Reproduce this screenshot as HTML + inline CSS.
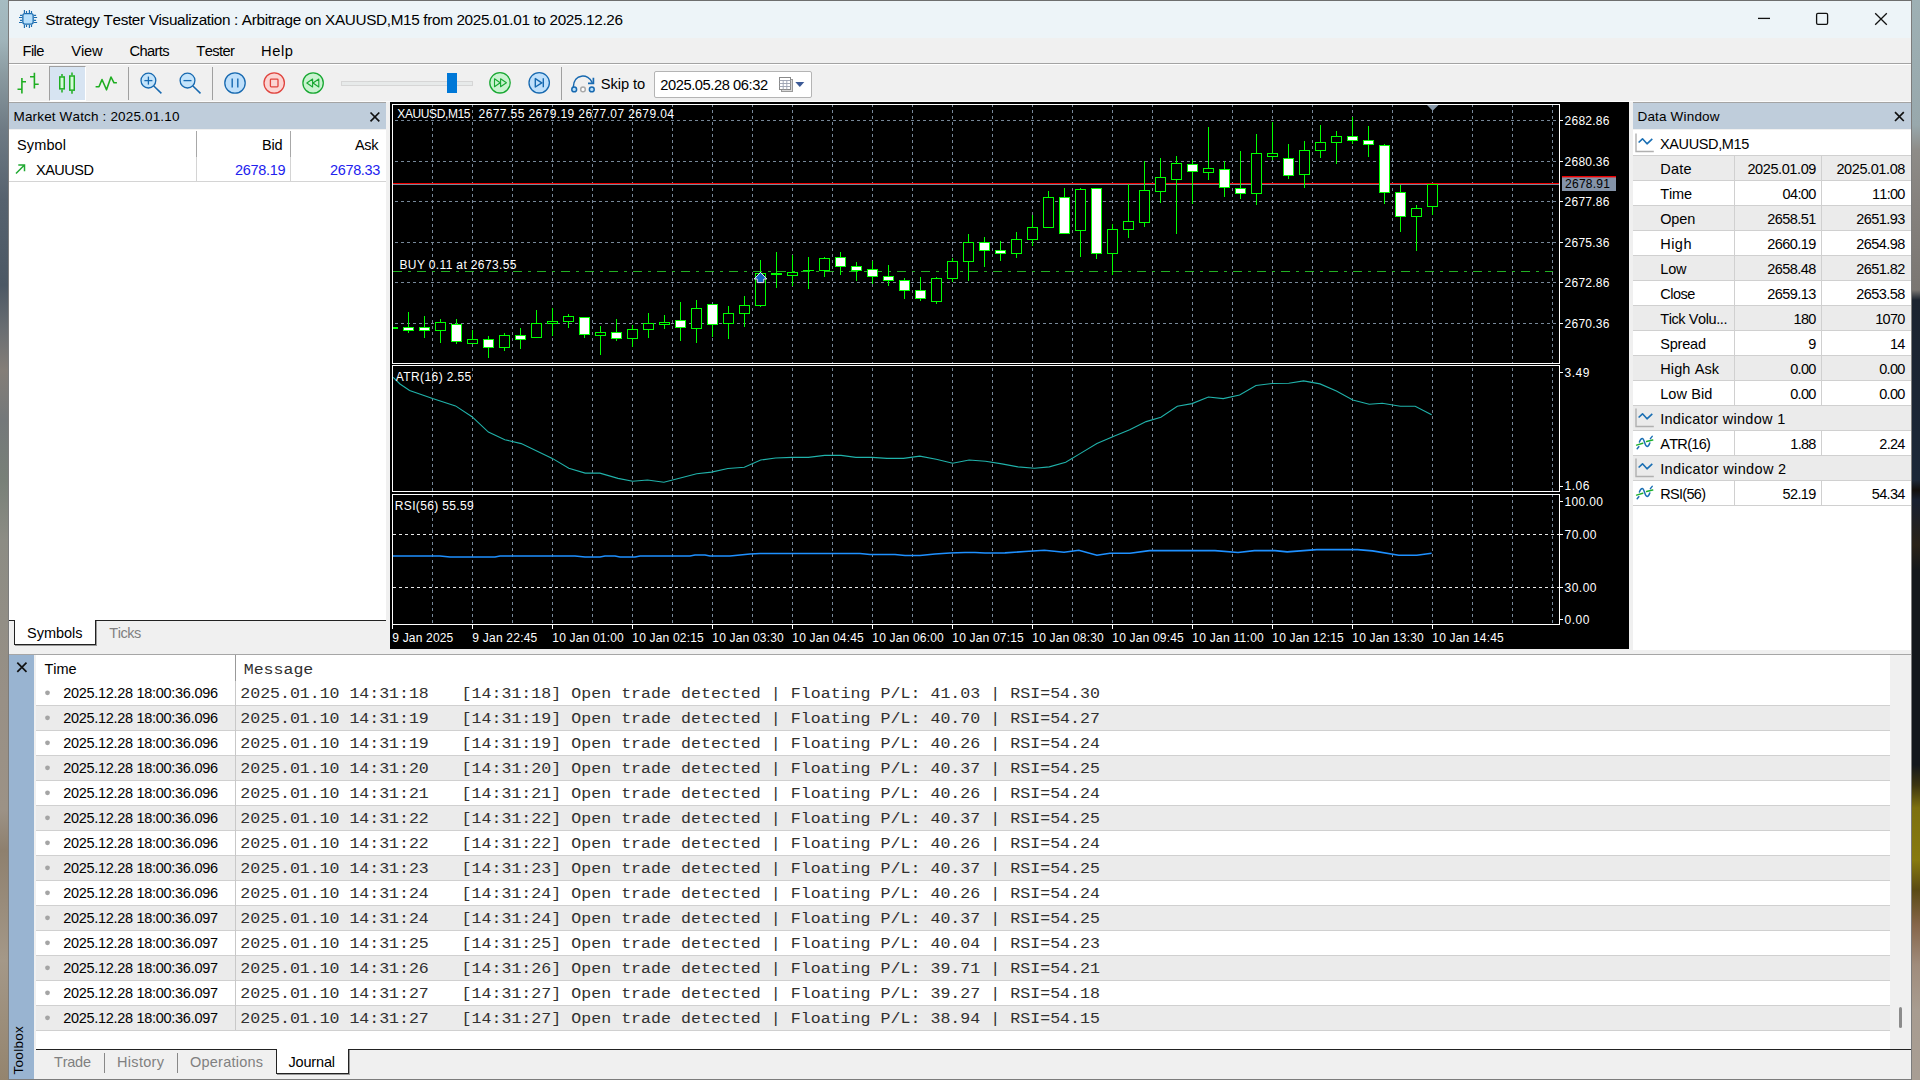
<!DOCTYPE html><html><head><meta charset="utf-8"><title>Strategy Tester Visualization</title><style>
*{box-sizing:border-box;margin:0;padding:0}
html,body{width:1920px;height:1080px;overflow:hidden}
body{position:relative;background:#8c8884;font-family:"Liberation Sans",sans-serif}
.a{position:absolute}
.t{position:absolute;white-space:pre;line-height:1;font-kerning:none}
.fs{font-family:"Liberation Sans",sans-serif}
.fm{font-family:"Liberation Mono",monospace;transform:scaleY(.85);transform-origin:0 76.65%}
#wl{left:0;top:0;width:10px;height:1080px;background:linear-gradient(180deg,#a6bcc2 0,#a0b4ba 40px,#8a9aa0 75px,#6e7a84 130px,#56626e 200px,#4c5864 285px,#6a6e72 330px,#847e78 370px,#74787a 420px,#788078 480px,#8c8c84 540px,#989086 700px,#9c9286 810px,#8e806e 850px,#a49888 960px,#94846e 1080px)}
#wr{left:1911px;top:0;width:9px;height:1080px;background:linear-gradient(180deg,#9eb0b4 0,#98a8ac 125px,#8e8c88 150px,#86827e 200px,#7a7672 290px,#1c2430 300px,#1c2838 480px,#120f0c 490px,#182030 500px,#2a2218 545px,#14181c 570px,#14181c 765px,#3c3410 785px,#7d7010 808px,#877a10 860px,#5a4a14 890px,#86664a 925px,#a08c7c 965px,#a89c90 1010px,#a89e94 1080px)}
#wb{display:none}
#win{left:8px;top:0;width:1904px;height:1080px;background:#f0f0f0;border:1px solid #7c7c7c;border-top-color:#6e6e6e}
#title{left:9px;top:1px;width:1902px;height:37px;background:#edf4f8}
#menu{left:9px;top:38px;width:1902px;height:25px;background:#f0f0f0}
#sep1{left:9px;top:63px;width:1902px;height:1px;background:#a3a3a3}
#sep2{left:9px;top:64px;width:1902px;height:1px;background:#fff}
#sep3{left:9px;top:101px;width:1902px;height:1px;background:#fbfbfb}
#tbsel{left:49px;top:66px;width:37px;height:35px;background:#d7e4f2;border:1px solid #fff;border-top-color:#a0a0a0;border-left-color:#a0a0a0}
.vsep{width:1px;height:33px;top:67px;background:#a0a0a0}
#skipbox{left:654px;top:71px;width:158px;height:27px;background:#fff;border:1px solid #b4b4b4;border-radius:2px}
.hdr{background:#bfcddb;height:27px;top:102px;border-top:1px solid #a4a4a4}
#mw{left:9px;top:130px;width:377px;height:490px;background:#fff}
.gl{background:#d4d4d4}
#mwtabline{left:9px;top:620px;width:377px;height:1px;background:#222}
#mwtab{left:14px;top:620px;width:82px;height:25px;background:#fff;border:1px solid #222;border-top:none;box-shadow:1px 1px 0 #999}
#dw{left:1633px;top:130px;width:278px;height:520px;background:#fff}
.dr{left:1633px;width:278px;height:25px;border-bottom:1px solid #d0d0d0}
.dr.g{background:#ebebeb}
.dc{width:1px;background:#d0d0d0}
#tbxline{left:9px;top:654px;width:1902px;height:1px;background:#a6a6a6}
#tbx{left:9px;top:655px;width:25px;height:424px;background:#99b4d1}
#jr{left:36px;top:655px;width:1854px;height:394px;background:#fff}
.jrow{left:36px;width:1854px;height:25px;border-bottom:1px solid #d0d0d0}
.jrow.g{background:#ebebeb}
#jsb{left:1890px;top:655px;width:21px;height:394px;background:#f0f0f0}
#jth{left:1898.5px;top:1007px;width:3.5px;height:21px;background:#8c8c8c;border-radius:2px}
#jtabline{left:36px;top:1049px;width:1875px;height:1px;background:#222}
#jtab{left:276px;top:1049px;width:73px;height:25px;background:#fff;border:1px solid #222;border-top:none;box-shadow:1px 1px 0 #999}
.tsep{width:1px;height:20px;top:1053px;background:#888}
#toolboxlbl{left:0;top:0;transform-origin:0 0;transform:translate(11.5px,1074.5px) rotate(-90deg);font-size:13.5px;white-space:pre;line-height:1;letter-spacing:0.3px}
</style></head><body>
<div id="wl" class="a"></div><div id="wr" class="a"></div><div id="wb" class="a"></div>
<div id="win" class="a"></div><div id="title" class="a"></div><div id="menu" class="a"></div><div id="sep1" class="a"></div><div id="sep2" class="a"></div><div id="sep3" class="a"></div>
<div id="tbsel" class="a"></div><div class="a vsep" style="left:128px"></div><div class="a vsep" style="left:212px"></div><div class="a vsep" style="left:561px"></div><div id="skipbox" class="a"></div>
<div class="a hdr" style="left:9px;width:377px"></div><div id="mw" class="a"></div>
<div class="a gl" style="left:196px;top:131px;width:1px;height:51px"></div><div class="a gl" style="left:290px;top:131px;width:1px;height:51px"></div><div class="a gl" style="left:9px;top:181px;width:377px;height:1px"></div><div class="a" style="left:196px;top:131px;width:1px;height:26px;background:#a8a8a8"></div><div class="a" style="left:290px;top:131px;width:1px;height:26px;background:#a8a8a8"></div>
<div id="mwtabline" class="a"></div><div id="mwtab" class="a"></div>
<div class="a hdr" style="left:1633px;width:278px"></div><div id="dw" class="a"></div>
<div class="a dr" style="top:131px"></div>
<div class="a dr g" style="top:156px"></div>
<div class="a dr" style="top:181px"></div>
<div class="a dr g" style="top:206px"></div>
<div class="a dr" style="top:231px"></div>
<div class="a dr g" style="top:256px"></div>
<div class="a dr" style="top:281px"></div>
<div class="a dr g" style="top:306px"></div>
<div class="a dr" style="top:331px"></div>
<div class="a dr g" style="top:356px"></div>
<div class="a dr" style="top:381px"></div>
<div class="a dr g" style="top:406px"></div>
<div class="a dr" style="top:431px"></div>
<div class="a dr g" style="top:456px"></div>
<div class="a dr" style="top:481px"></div>
<div class="a dc" style="left:1734px;top:156px;height:249px"></div><div class="a dc" style="left:1821px;top:156px;height:249px"></div>
<div class="a dc" style="left:1734px;top:431px;height:24px"></div><div class="a dc" style="left:1821px;top:431px;height:24px"></div>
<div class="a dc" style="left:1734px;top:481px;height:24px"></div><div class="a dc" style="left:1821px;top:481px;height:24px"></div>
<svg class="chart" width="1239" height="547" viewBox="390 102 1239 547" style="position:absolute;left:390px;top:102px">
<rect x="390" y="102" width="1239" height="547" fill="#000"/>
<line x1="432.5" y1="104" x2="432.5" y2="624" stroke="#778899" stroke-width="1" stroke-dasharray="3 3" shape-rendering="crispEdges"/>
<line x1="472.5" y1="104" x2="472.5" y2="624" stroke="#778899" stroke-width="1" stroke-dasharray="3 3" shape-rendering="crispEdges"/>
<line x1="512.5" y1="104" x2="512.5" y2="624" stroke="#778899" stroke-width="1" stroke-dasharray="3 3" shape-rendering="crispEdges"/>
<line x1="552.5" y1="104" x2="552.5" y2="624" stroke="#778899" stroke-width="1" stroke-dasharray="3 3" shape-rendering="crispEdges"/>
<line x1="592.5" y1="104" x2="592.5" y2="624" stroke="#778899" stroke-width="1" stroke-dasharray="3 3" shape-rendering="crispEdges"/>
<line x1="632.5" y1="104" x2="632.5" y2="624" stroke="#778899" stroke-width="1" stroke-dasharray="3 3" shape-rendering="crispEdges"/>
<line x1="672.5" y1="104" x2="672.5" y2="624" stroke="#778899" stroke-width="1" stroke-dasharray="3 3" shape-rendering="crispEdges"/>
<line x1="712.5" y1="104" x2="712.5" y2="624" stroke="#778899" stroke-width="1" stroke-dasharray="3 3" shape-rendering="crispEdges"/>
<line x1="752.5" y1="104" x2="752.5" y2="624" stroke="#778899" stroke-width="1" stroke-dasharray="3 3" shape-rendering="crispEdges"/>
<line x1="792.5" y1="104" x2="792.5" y2="624" stroke="#778899" stroke-width="1" stroke-dasharray="3 3" shape-rendering="crispEdges"/>
<line x1="832.5" y1="104" x2="832.5" y2="624" stroke="#778899" stroke-width="1" stroke-dasharray="3 3" shape-rendering="crispEdges"/>
<line x1="872.5" y1="104" x2="872.5" y2="624" stroke="#778899" stroke-width="1" stroke-dasharray="3 3" shape-rendering="crispEdges"/>
<line x1="912.5" y1="104" x2="912.5" y2="624" stroke="#778899" stroke-width="1" stroke-dasharray="3 3" shape-rendering="crispEdges"/>
<line x1="952.5" y1="104" x2="952.5" y2="624" stroke="#778899" stroke-width="1" stroke-dasharray="3 3" shape-rendering="crispEdges"/>
<line x1="992.5" y1="104" x2="992.5" y2="624" stroke="#778899" stroke-width="1" stroke-dasharray="3 3" shape-rendering="crispEdges"/>
<line x1="1032.5" y1="104" x2="1032.5" y2="624" stroke="#778899" stroke-width="1" stroke-dasharray="3 3" shape-rendering="crispEdges"/>
<line x1="1072.5" y1="104" x2="1072.5" y2="624" stroke="#778899" stroke-width="1" stroke-dasharray="3 3" shape-rendering="crispEdges"/>
<line x1="1112.5" y1="104" x2="1112.5" y2="624" stroke="#778899" stroke-width="1" stroke-dasharray="3 3" shape-rendering="crispEdges"/>
<line x1="1152.5" y1="104" x2="1152.5" y2="624" stroke="#778899" stroke-width="1" stroke-dasharray="3 3" shape-rendering="crispEdges"/>
<line x1="1192.5" y1="104" x2="1192.5" y2="624" stroke="#778899" stroke-width="1" stroke-dasharray="3 3" shape-rendering="crispEdges"/>
<line x1="1232.5" y1="104" x2="1232.5" y2="624" stroke="#778899" stroke-width="1" stroke-dasharray="3 3" shape-rendering="crispEdges"/>
<line x1="1272.5" y1="104" x2="1272.5" y2="624" stroke="#778899" stroke-width="1" stroke-dasharray="3 3" shape-rendering="crispEdges"/>
<line x1="1312.5" y1="104" x2="1312.5" y2="624" stroke="#778899" stroke-width="1" stroke-dasharray="3 3" shape-rendering="crispEdges"/>
<line x1="1352.5" y1="104" x2="1352.5" y2="624" stroke="#778899" stroke-width="1" stroke-dasharray="3 3" shape-rendering="crispEdges"/>
<line x1="1392.5" y1="104" x2="1392.5" y2="624" stroke="#778899" stroke-width="1" stroke-dasharray="3 3" shape-rendering="crispEdges"/>
<line x1="1432.5" y1="104" x2="1432.5" y2="624" stroke="#778899" stroke-width="1" stroke-dasharray="3 3" shape-rendering="crispEdges"/>
<line x1="1472.5" y1="104" x2="1472.5" y2="624" stroke="#778899" stroke-width="1" stroke-dasharray="3 3" shape-rendering="crispEdges"/>
<line x1="1512.5" y1="104" x2="1512.5" y2="624" stroke="#778899" stroke-width="1" stroke-dasharray="3 3" shape-rendering="crispEdges"/>
<line x1="1552.5" y1="104" x2="1552.5" y2="624" stroke="#778899" stroke-width="1" stroke-dasharray="3 3" shape-rendering="crispEdges"/>
<rect x="393" y="364" width="1166" height="1" fill="#000"/><rect x="393" y="492" width="1166" height="2" fill="#000"/>
<line x1="395" y1="120.5" x2="1559" y2="120.5" stroke="#778899" stroke-width="1" stroke-dasharray="3 3" shape-rendering="crispEdges"/>
<line x1="395" y1="161.5" x2="1559" y2="161.5" stroke="#778899" stroke-width="1" stroke-dasharray="3 3" shape-rendering="crispEdges"/>
<line x1="395" y1="201.5" x2="1559" y2="201.5" stroke="#778899" stroke-width="1" stroke-dasharray="3 3" shape-rendering="crispEdges"/>
<line x1="395" y1="242.5" x2="1559" y2="242.5" stroke="#778899" stroke-width="1" stroke-dasharray="3 3" shape-rendering="crispEdges"/>
<line x1="395" y1="282.5" x2="1559" y2="282.5" stroke="#778899" stroke-width="1" stroke-dasharray="3 3" shape-rendering="crispEdges"/>
<line x1="395" y1="323.5" x2="1559" y2="323.5" stroke="#778899" stroke-width="1" stroke-dasharray="3 3" shape-rendering="crispEdges"/>
<line x1="393" y1="534.5" x2="1559" y2="534.5" stroke="#e8e8e8" stroke-width="1" stroke-dasharray="3 3" shape-rendering="crispEdges"/>
<line x1="393" y1="587.5" x2="1559" y2="587.5" stroke="#e8e8e8" stroke-width="1" stroke-dasharray="3 3" shape-rendering="crispEdges"/>
<line x1="393" y1="271.5" x2="1553" y2="271.5" stroke="#22b022" stroke-width="1" stroke-dasharray="9 6 3 6" shape-rendering="crispEdges"/>
<rect shape-rendering="crispEdges" x="393" y="183" width="1166" height="1" fill="#f00000"/>
<rect shape-rendering="crispEdges" x="393" y="184" width="1166" height="1" fill="#778899"/>
<g shape-rendering="crispEdges" stroke="#00ff00" stroke-width="1">
<rect x="393" y="327" width="5" height="2" fill="#00ff00" stroke="none"/>
<line x1="408.5" y1="312" x2="408.5" y2="333"/>
<rect x="403.5" y="327.5" width="10" height="3" fill="#fff"/>
<line x1="424.5" y1="316" x2="424.5" y2="338"/>
<rect x="419.5" y="327.5" width="10" height="3" fill="#fff"/>
<line x1="440.5" y1="319" x2="440.5" y2="343"/>
<rect x="435.5" y="322.5" width="10" height="8" fill="#000"/>
<line x1="456.5" y1="319" x2="456.5" y2="344"/>
<rect x="451.5" y="324.5" width="10" height="17" fill="#fff"/>
<line x1="472.5" y1="330" x2="472.5" y2="344"/>
<rect x="467.5" y="339.5" width="10" height="4" fill="#000"/>
<line x1="488.5" y1="336" x2="488.5" y2="358"/>
<rect x="483.5" y="339.5" width="10" height="8" fill="#fff"/>
<line x1="504.5" y1="333" x2="504.5" y2="351"/>
<rect x="499.5" y="335.5" width="10" height="12" fill="#000"/>
<line x1="520.5" y1="328" x2="520.5" y2="349"/>
<rect x="515.5" y="335.5" width="10" height="4" fill="#fff"/>
<line x1="536.5" y1="310" x2="536.5" y2="338"/>
<rect x="531.5" y="323.5" width="10" height="14" fill="#000"/>
<line x1="552.5" y1="308" x2="552.5" y2="336"/>
<rect x="547.5" y="321.5" width="10" height="2" fill="#000"/>
<line x1="568.5" y1="314" x2="568.5" y2="328"/>
<rect x="563.5" y="316.5" width="10" height="5" fill="#000"/>
<line x1="584.5" y1="317" x2="584.5" y2="338"/>
<rect x="579.5" y="317.5" width="10" height="17" fill="#fff"/>
<line x1="600.5" y1="326" x2="600.5" y2="355"/>
<rect x="595.5" y="332.5" width="10" height="3" fill="#000"/>
<line x1="616.5" y1="319" x2="616.5" y2="341"/>
<rect x="611.5" y="332.5" width="10" height="6" fill="#fff"/>
<line x1="632.5" y1="325" x2="632.5" y2="347"/>
<rect x="627.5" y="329.5" width="10" height="9" fill="#000"/>
<line x1="648.5" y1="313" x2="648.5" y2="338"/>
<rect x="643.5" y="323.5" width="10" height="6" fill="#000"/>
<line x1="664.5" y1="315" x2="664.5" y2="329"/>
<rect x="659.5" y="322.5" width="10" height="2" fill="#000"/>
<line x1="680.5" y1="302" x2="680.5" y2="341"/>
<rect x="675.5" y="320.5" width="10" height="7" fill="#fff"/>
<line x1="696.5" y1="300" x2="696.5" y2="343"/>
<rect x="691.5" y="308.5" width="10" height="20" fill="#000"/>
<line x1="712.5" y1="304" x2="712.5" y2="337"/>
<rect x="707.5" y="304.5" width="10" height="20" fill="#fff"/>
<line x1="728.5" y1="306" x2="728.5" y2="339"/>
<rect x="723.5" y="313.5" width="10" height="10" fill="#000"/>
<line x1="744.5" y1="296" x2="744.5" y2="327"/>
<rect x="739.5" y="305.5" width="10" height="8" fill="#000"/>
<line x1="760.5" y1="260" x2="760.5" y2="307"/>
<rect x="755.5" y="273.5" width="10" height="32" fill="#000"/>
<line x1="776.5" y1="252" x2="776.5" y2="288"/>
<rect x="771" y="273" width="11" height="2" fill="#00ff00" stroke="none"/>
<line x1="792.5" y1="255" x2="792.5" y2="286"/>
<rect x="787.5" y="272.5" width="10" height="3" fill="#000"/>
<line x1="808.5" y1="257" x2="808.5" y2="289"/>
<line x1="803" y1="270.5" x2="814" y2="270.5"/>
<line x1="824.5" y1="257" x2="824.5" y2="277"/>
<rect x="819.5" y="258.5" width="10" height="12" fill="#000"/>
<line x1="840.5" y1="252" x2="840.5" y2="275"/>
<rect x="835.5" y="257.5" width="10" height="9" fill="#fff"/>
<line x1="856.5" y1="262" x2="856.5" y2="281"/>
<rect x="851.5" y="266.5" width="10" height="4" fill="#fff"/>
<line x1="872.5" y1="261" x2="872.5" y2="284"/>
<rect x="867.5" y="269.5" width="10" height="7" fill="#fff"/>
<line x1="888.5" y1="265" x2="888.5" y2="286"/>
<rect x="883.5" y="276.5" width="10" height="4" fill="#fff"/>
<line x1="904.5" y1="278" x2="904.5" y2="299"/>
<rect x="899.5" y="280.5" width="10" height="10" fill="#fff"/>
<line x1="920.5" y1="277" x2="920.5" y2="301"/>
<rect x="915.5" y="290.5" width="10" height="8" fill="#fff"/>
<line x1="936.5" y1="277" x2="936.5" y2="304"/>
<rect x="931.5" y="278.5" width="10" height="23" fill="#000"/>
<line x1="952.5" y1="258" x2="952.5" y2="282"/>
<rect x="947.5" y="261.5" width="10" height="17" fill="#000"/>
<line x1="968.5" y1="234" x2="968.5" y2="281"/>
<rect x="963.5" y="242.5" width="10" height="19" fill="#000"/>
<line x1="984.5" y1="237" x2="984.5" y2="267"/>
<rect x="979.5" y="242.5" width="10" height="8" fill="#fff"/>
<line x1="1000.5" y1="241" x2="1000.5" y2="261"/>
<rect x="995.5" y="250.5" width="10" height="3" fill="#fff"/>
<line x1="1016.5" y1="232" x2="1016.5" y2="258"/>
<rect x="1011.5" y="239.5" width="10" height="14" fill="#000"/>
<line x1="1032.5" y1="215" x2="1032.5" y2="246"/>
<rect x="1027.5" y="227.5" width="10" height="12" fill="#000"/>
<line x1="1048.5" y1="191" x2="1048.5" y2="228"/>
<rect x="1043.5" y="197.5" width="10" height="30" fill="#000"/>
<line x1="1064.5" y1="188" x2="1064.5" y2="234"/>
<rect x="1059.5" y="197.5" width="10" height="36" fill="#fff"/>
<line x1="1080.5" y1="188" x2="1080.5" y2="257"/>
<rect x="1075.5" y="189.5" width="10" height="41" fill="#000"/>
<line x1="1096.5" y1="188" x2="1096.5" y2="259"/>
<rect x="1091.5" y="188.5" width="10" height="65" fill="#fff"/>
<line x1="1112.5" y1="224" x2="1112.5" y2="275"/>
<rect x="1107.5" y="229.5" width="10" height="24" fill="#000"/>
<line x1="1128.5" y1="184" x2="1128.5" y2="238"/>
<rect x="1123.5" y="221.5" width="10" height="8" fill="#000"/>
<line x1="1144.5" y1="161" x2="1144.5" y2="227"/>
<rect x="1139.5" y="190.5" width="10" height="32" fill="#000"/>
<line x1="1160.5" y1="158" x2="1160.5" y2="203"/>
<rect x="1155.5" y="177.5" width="10" height="14" fill="#000"/>
<line x1="1176.5" y1="156" x2="1176.5" y2="234"/>
<rect x="1171.5" y="163.5" width="10" height="16" fill="#000"/>
<line x1="1192.5" y1="160" x2="1192.5" y2="204"/>
<rect x="1187.5" y="164.5" width="10" height="7" fill="#fff"/>
<line x1="1208.5" y1="127" x2="1208.5" y2="180"/>
<rect x="1203.5" y="168.5" width="10" height="4" fill="#000"/>
<line x1="1224.5" y1="161" x2="1224.5" y2="197"/>
<rect x="1219.5" y="169.5" width="10" height="18" fill="#fff"/>
<line x1="1240.5" y1="151" x2="1240.5" y2="199"/>
<rect x="1235.5" y="188.5" width="10" height="5" fill="#fff"/>
<line x1="1256.5" y1="134" x2="1256.5" y2="205"/>
<rect x="1251.5" y="153.5" width="10" height="40" fill="#000"/>
<line x1="1272.5" y1="122" x2="1272.5" y2="160"/>
<rect x="1267.5" y="153.5" width="10" height="3" fill="#000"/>
<line x1="1288.5" y1="144" x2="1288.5" y2="179"/>
<rect x="1283.5" y="158.5" width="10" height="17" fill="#fff"/>
<line x1="1304.5" y1="141" x2="1304.5" y2="188"/>
<rect x="1299.5" y="150.5" width="10" height="24" fill="#000"/>
<line x1="1320.5" y1="125" x2="1320.5" y2="158"/>
<rect x="1315.5" y="142.5" width="10" height="8" fill="#000"/>
<line x1="1336.5" y1="131" x2="1336.5" y2="164"/>
<rect x="1331.5" y="136.5" width="10" height="6" fill="#000"/>
<line x1="1352.5" y1="117" x2="1352.5" y2="144"/>
<rect x="1347.5" y="136.5" width="10" height="4" fill="#fff"/>
<line x1="1368.5" y1="126" x2="1368.5" y2="157"/>
<rect x="1363.5" y="140.5" width="10" height="4" fill="#fff"/>
<line x1="1384.5" y1="144" x2="1384.5" y2="204"/>
<rect x="1379.5" y="145.5" width="10" height="47" fill="#fff"/>
<line x1="1400.5" y1="185" x2="1400.5" y2="232"/>
<rect x="1395.5" y="192.5" width="10" height="24" fill="#fff"/>
<line x1="1416.5" y1="205" x2="1416.5" y2="251"/>
<rect x="1411.5" y="208.5" width="10" height="8" fill="#000"/>
<line x1="1432.5" y1="184" x2="1432.5" y2="215"/>
<rect x="1427.5" y="184.5" width="10" height="22" fill="#000"/>
</g>
<path d="M760.5 272.3 L766.8 279 L763.8 279 L763.8 282.6 L757.2 282.6 L757.2 279 L754.2 279 Z" fill="#1560bd" stroke="#fff" stroke-width="0.9"/>
<path d="M1427 105 L1438.5 105 L1432.7 110.7 Z" fill="#8697a8"/>
<polyline fill="none" stroke="#20b2aa" stroke-width="1.1" points="393.2,377.3 400,384 409.6,390.4 432.6,398.6 455.5,405.9 472,416.7 488.4,432.1 504.8,439.7 521.2,443.6 552.3,458.4 568.8,468.2 585.2,473.1 599.9,473.1 618,478.4 632.7,481.3 647.5,480 663.9,482.3 680.3,478 696.7,473.8 711.5,472.1 727.9,468.5 744.3,467.2 760.7,460 775.5,458 791.9,457.4 808.3,457.4 824.7,455.4 841.1,455.4 855.9,457.4 872.3,457.4 887,458.4 903.4,458.4 919.8,456.1 936.2,459.3 952.7,463.3 969.1,460 985.5,461.3 1001.9,463.9 1018,466.9 1034.5,468.2 1049.3,466.9 1065.7,462.3 1080.5,453.4 1096.9,443.6 1113.3,436.4 1129.7,429.8 1146.1,421.6 1160.9,417.3 1177.3,406.2 1192,403.6 1208.4,397 1223.2,398.6 1239.6,395 1256,385.5 1272.4,383.5 1288.8,383.2 1303.6,380.9 1320,383.9 1336.4,391.1 1352.8,400 1369.2,404.2 1382.3,403.2 1400.4,406.2 1415.2,406.2 1431.6,414.7"/>
<polyline fill="none" stroke="#1e90ff" stroke-width="1.6" points="393,556 440,556 450,557 495,557 500,556 575,556 585,557 600,557 605,556 615,556 620,557 635,557 640,556 690,556 695,555 705,555 710,556 730,556 740,555 750,554 760,553.5 860,553.5 870,554.5 895,554.5 905,555.5 920,555.5 935,554 950,553 965,552.5 975,552.5 985,553 1005,552.9 1025,551.5 1044.4,550.2 1064,552.2 1078.8,550.2 1096.9,555.2 1110,553.2 1130,553.2 1149.4,550.6 1215,550.6 1238,552.5 1254.4,550.6 1275,550.6 1287.2,551.9 1316.7,549.6 1357.7,549.6 1372.5,550.9 1398.8,555.2 1416.8,555.2 1431.6,553.2"/>
<rect x="392.5" y="104.5" width="1167" height="259" fill="none" stroke="#fff" stroke-width="1" shape-rendering="crispEdges"/>
<rect x="392.5" y="365.5" width="1167" height="126" fill="none" stroke="#fff" stroke-width="1" shape-rendering="crispEdges"/>
<rect x="392.5" y="494.5" width="1167" height="130" fill="none" stroke="#fff" stroke-width="1" shape-rendering="crispEdges"/>
<line x1="1559" y1="120.5" x2="1563" y2="120.5" stroke="#fff" stroke-width="1" shape-rendering="crispEdges"/>
<line x1="1559" y1="161.5" x2="1563" y2="161.5" stroke="#fff" stroke-width="1" shape-rendering="crispEdges"/>
<line x1="1559" y1="201.5" x2="1563" y2="201.5" stroke="#fff" stroke-width="1" shape-rendering="crispEdges"/>
<line x1="1559" y1="242.5" x2="1563" y2="242.5" stroke="#fff" stroke-width="1" shape-rendering="crispEdges"/>
<line x1="1559" y1="282.5" x2="1563" y2="282.5" stroke="#fff" stroke-width="1" shape-rendering="crispEdges"/>
<line x1="1559" y1="323.5" x2="1563" y2="323.5" stroke="#fff" stroke-width="1" shape-rendering="crispEdges"/>
<line x1="1559" y1="372.5" x2="1563" y2="372.5" stroke="#fff" stroke-width="1" shape-rendering="crispEdges"/>
<line x1="1559" y1="486.5" x2="1563" y2="486.5" stroke="#fff" stroke-width="1" shape-rendering="crispEdges"/>
<line x1="1559" y1="501.5" x2="1563" y2="501.5" stroke="#fff" stroke-width="1" shape-rendering="crispEdges"/>
<line x1="1559" y1="534.5" x2="1563" y2="534.5" stroke="#fff" stroke-width="1" shape-rendering="crispEdges"/>
<line x1="1559" y1="587.5" x2="1563" y2="587.5" stroke="#fff" stroke-width="1" shape-rendering="crispEdges"/>
<line x1="1559" y1="619.5" x2="1563" y2="619.5" stroke="#fff" stroke-width="1" shape-rendering="crispEdges"/>
<line x1="392.5" y1="625" x2="392.5" y2="629" stroke="#fff" stroke-width="1" shape-rendering="crispEdges"/>
<line x1="472.5" y1="625" x2="472.5" y2="629" stroke="#fff" stroke-width="1" shape-rendering="crispEdges"/>
<line x1="552.5" y1="625" x2="552.5" y2="629" stroke="#fff" stroke-width="1" shape-rendering="crispEdges"/>
<line x1="632.5" y1="625" x2="632.5" y2="629" stroke="#fff" stroke-width="1" shape-rendering="crispEdges"/>
<line x1="712.5" y1="625" x2="712.5" y2="629" stroke="#fff" stroke-width="1" shape-rendering="crispEdges"/>
<line x1="792.5" y1="625" x2="792.5" y2="629" stroke="#fff" stroke-width="1" shape-rendering="crispEdges"/>
<line x1="872.5" y1="625" x2="872.5" y2="629" stroke="#fff" stroke-width="1" shape-rendering="crispEdges"/>
<line x1="952.5" y1="625" x2="952.5" y2="629" stroke="#fff" stroke-width="1" shape-rendering="crispEdges"/>
<line x1="1032.5" y1="625" x2="1032.5" y2="629" stroke="#fff" stroke-width="1" shape-rendering="crispEdges"/>
<line x1="1112.5" y1="625" x2="1112.5" y2="629" stroke="#fff" stroke-width="1" shape-rendering="crispEdges"/>
<line x1="1192.5" y1="625" x2="1192.5" y2="629" stroke="#fff" stroke-width="1" shape-rendering="crispEdges"/>
<line x1="1272.5" y1="625" x2="1272.5" y2="629" stroke="#fff" stroke-width="1" shape-rendering="crispEdges"/>
<line x1="1352.5" y1="625" x2="1352.5" y2="629" stroke="#fff" stroke-width="1" shape-rendering="crispEdges"/>
<line x1="1432.5" y1="625" x2="1432.5" y2="629" stroke="#fff" stroke-width="1" shape-rendering="crispEdges"/>
<rect x="1562" y="176" width="54" height="15" fill="#8493a8"/>
<rect x="1562" y="176" width="54" height="1.4" fill="#f00000"/>
<text x="1564.5" y="124.5" textLength="45.0" font-family="Liberation Sans, sans-serif" font-size="12" fill="#fff" lengthAdjust="spacing" xml:space="preserve">2682.86</text>
<text x="1564.5" y="165.5" textLength="45.0" font-family="Liberation Sans, sans-serif" font-size="12" fill="#fff" lengthAdjust="spacing" xml:space="preserve">2680.36</text>
<text x="1564.5" y="205.5" textLength="45.0" font-family="Liberation Sans, sans-serif" font-size="12" fill="#fff" lengthAdjust="spacing" xml:space="preserve">2677.86</text>
<text x="1564.5" y="246.5" textLength="45.0" font-family="Liberation Sans, sans-serif" font-size="12" fill="#fff" lengthAdjust="spacing" xml:space="preserve">2675.36</text>
<text x="1564.5" y="286.5" textLength="45.0" font-family="Liberation Sans, sans-serif" font-size="12" fill="#fff" lengthAdjust="spacing" xml:space="preserve">2672.86</text>
<text x="1564.5" y="327.5" textLength="45.0" font-family="Liberation Sans, sans-serif" font-size="12" fill="#fff" lengthAdjust="spacing" xml:space="preserve">2670.36</text>
<text x="1565" y="188" textLength="45" font-family="Liberation Sans, sans-serif" font-size="12" fill="#000" lengthAdjust="spacing" xml:space="preserve">2678.91</text>
<text x="1564.5" y="376.5" textLength="25.0" font-family="Liberation Sans, sans-serif" font-size="12" fill="#fff" lengthAdjust="spacing" xml:space="preserve">3.49</text>
<text x="1564.5" y="490" textLength="25.0" font-family="Liberation Sans, sans-serif" font-size="12" fill="#fff" lengthAdjust="spacing" xml:space="preserve">1.06</text>
<text x="1564.5" y="505.5" textLength="38.5" font-family="Liberation Sans, sans-serif" font-size="12" fill="#fff" lengthAdjust="spacing" xml:space="preserve">100.00</text>
<text x="1564.5" y="538.7" textLength="32.0" font-family="Liberation Sans, sans-serif" font-size="12" fill="#fff" lengthAdjust="spacing" xml:space="preserve">70.00</text>
<text x="1564.5" y="591.5" textLength="32.0" font-family="Liberation Sans, sans-serif" font-size="12" fill="#fff" lengthAdjust="spacing" xml:space="preserve">30.00</text>
<text x="1564.5" y="623.5" textLength="25.0" font-family="Liberation Sans, sans-serif" font-size="12" fill="#fff" lengthAdjust="spacing" xml:space="preserve">0.00</text>
<text x="397.3" y="117.7" textLength="73.19999999999999" font-family="Liberation Sans, sans-serif" font-size="12" fill="#fff" lengthAdjust="spacing" xml:space="preserve">XAUUSD,M15</text>
<text x="478.6" y="117.7" textLength="195.39999999999998" font-family="Liberation Sans, sans-serif" font-size="12" fill="#fff" lengthAdjust="spacing" xml:space="preserve">2677.55 2679.19 2677.07 2679.04</text>
<text x="399.5" y="268.7" textLength="116.89999999999998" font-family="Liberation Sans, sans-serif" font-size="12" fill="#fff" lengthAdjust="spacing" xml:space="preserve">BUY 0.11 at 2673.55</text>
<text x="395.8" y="381" textLength="75.5" font-family="Liberation Sans, sans-serif" font-size="12" fill="#fff" lengthAdjust="spacing" xml:space="preserve">ATR(16) 2.55</text>
<text x="394.8" y="510" textLength="78.80000000000001" font-family="Liberation Sans, sans-serif" font-size="12" fill="#fff" lengthAdjust="spacing" xml:space="preserve">RSI(56) 55.59</text>
<text x="392.3" y="641.5" textLength="61.0" font-family="Liberation Sans, sans-serif" font-size="12" fill="#fff" lengthAdjust="spacing" xml:space="preserve">9 Jan 2025</text>
<text x="472.3" y="641.5" textLength="64.99999999999994" font-family="Liberation Sans, sans-serif" font-size="12" fill="#fff" lengthAdjust="spacing" xml:space="preserve">9 Jan 22:45</text>
<text x="552.3" y="641.5" textLength="71.5" font-family="Liberation Sans, sans-serif" font-size="12" fill="#fff" lengthAdjust="spacing" xml:space="preserve">10 Jan 01:00</text>
<text x="632.3" y="641.5" textLength="71.5" font-family="Liberation Sans, sans-serif" font-size="12" fill="#fff" lengthAdjust="spacing" xml:space="preserve">10 Jan 02:15</text>
<text x="712.3" y="641.5" textLength="71.5" font-family="Liberation Sans, sans-serif" font-size="12" fill="#fff" lengthAdjust="spacing" xml:space="preserve">10 Jan 03:30</text>
<text x="792.3" y="641.5" textLength="71.5" font-family="Liberation Sans, sans-serif" font-size="12" fill="#fff" lengthAdjust="spacing" xml:space="preserve">10 Jan 04:45</text>
<text x="872.3" y="641.5" textLength="71.5" font-family="Liberation Sans, sans-serif" font-size="12" fill="#fff" lengthAdjust="spacing" xml:space="preserve">10 Jan 06:00</text>
<text x="952.3" y="641.5" textLength="71.5" font-family="Liberation Sans, sans-serif" font-size="12" fill="#fff" lengthAdjust="spacing" xml:space="preserve">10 Jan 07:15</text>
<text x="1032.3" y="641.5" textLength="71.5" font-family="Liberation Sans, sans-serif" font-size="12" fill="#fff" lengthAdjust="spacing" xml:space="preserve">10 Jan 08:30</text>
<text x="1112.3" y="641.5" textLength="71.5" font-family="Liberation Sans, sans-serif" font-size="12" fill="#fff" lengthAdjust="spacing" xml:space="preserve">10 Jan 09:45</text>
<text x="1192.3" y="641.5" textLength="71.5" font-family="Liberation Sans, sans-serif" font-size="12" fill="#fff" lengthAdjust="spacing" xml:space="preserve">10 Jan 11:00</text>
<text x="1272.3" y="641.5" textLength="71.5" font-family="Liberation Sans, sans-serif" font-size="12" fill="#fff" lengthAdjust="spacing" xml:space="preserve">10 Jan 12:15</text>
<text x="1352.3" y="641.5" textLength="71.5" font-family="Liberation Sans, sans-serif" font-size="12" fill="#fff" lengthAdjust="spacing" xml:space="preserve">10 Jan 13:30</text>
<text x="1432.3" y="641.5" textLength="71.5" font-family="Liberation Sans, sans-serif" font-size="12" fill="#fff" lengthAdjust="spacing" xml:space="preserve">10 Jan 14:45</text>
</svg>
<div id="tbxline" class="a"></div><div id="tbx" class="a"></div><div id="jr" class="a"></div><div id="jsb" class="a"></div>
<div class="a jrow" style="top:681px"></div>
<div class="a jrow g" style="top:706px"></div>
<div class="a jrow" style="top:731px"></div>
<div class="a jrow g" style="top:756px"></div>
<div class="a jrow" style="top:781px"></div>
<div class="a jrow g" style="top:806px"></div>
<div class="a jrow" style="top:831px"></div>
<div class="a jrow g" style="top:856px"></div>
<div class="a jrow" style="top:881px"></div>
<div class="a jrow g" style="top:906px"></div>
<div class="a jrow" style="top:931px"></div>
<div class="a jrow g" style="top:956px"></div>
<div class="a jrow" style="top:981px"></div>
<div class="a jrow g" style="top:1006px"></div>
<div class="a gl" style="left:235px;top:655px;width:1px;height:375px;background:#c8c8c8"></div><div class="a" style="left:235px;top:655px;width:1px;height:26px;background:#999"></div>
<div id="jth" class="a"></div><div id="jtabline" class="a"></div><div id="jtab" class="a"></div><div class="a tsep" style="left:104px"></div><div class="a tsep" style="left:177px"></div>
<div id="toolboxlbl" class="a fs">Toolbox</div>
<svg width="1902" height="102" viewBox="9 0 1902 102" style="position:absolute;left:9px;top:0">
<g stroke="#1b6cb0" stroke-width="1.15" fill="none">
<path d="M24.4 9.9 V13 M26.5 11 V13 M29.4 9.9 V13 M31.5 11 V13 M24.4 24.7 V27.9 M26.5 24.7 V26.9 M29.4 24.7 V27.9 M31.5 24.7 V26.9 M20 15.4 H22.2 M19 17.5 H22.2 M20 20.4 H22.2 M19 22.5 H22.2 M33.7 15.4 H36.1 M33.7 17.5 H37.1 M33.7 20.4 H36.1 M33.7 22.5 H37.1"/>
<rect x="22.85" y="13.6" width="10.3" height="10.5" rx="2" fill="#b8e0fc" stroke-width="1.3"/></g>
<g stroke="#111" stroke-width="1.3" fill="none"><line x1="1758" y1="18.4" x2="1770" y2="18.4"/><rect x="1816.6" y="13.4" width="11" height="11" rx="1.3"/><path d="M1875.2 13.2 L1886.8 24.8 M1886.8 13.2 L1875.2 24.8"/></g>
<g stroke="#1fae22" stroke-width="1.6" fill="none"><path d="M21.9 78 V93.4 M17.5 89.3 H21.9 M21.9 81.8 H26 M34.4 72.8 V88.4 M30 76.8 H34.4 M34.4 84.3 H38.7"/></g>
<g stroke="#1fae22" stroke-width="1.5" fill="#d5fbd9"><path d="M62 74 V76.2 M62 89.6 V92.4 M72 72.4 V75.3 M72 90.9 V93.7" /><rect x="59.75" y="76.95" width="4.5" height="11.9"/><rect x="69.75" y="76" width="4.5" height="14.15"/></g>
<path d="M95.6 86.8 H99 L102 79.5 L106.5 89.8 L111 77 L114 82.8 H116.9" stroke="#1fae22" stroke-width="1.6" fill="none" stroke-linejoin="round"/>
<g stroke="#1769b0" stroke-width="1.3" fill="none"><circle cx="148.4" cy="80.6" r="7.4" fill="#c4e4fb"/><path d="M153.8 86 L161.4 93.4" stroke-width="1.5"/><path d="M144.4 80.6 H152.4"/><path d="M148.4 76.6 V84.6"/></g>
<g stroke="#1769b0" stroke-width="1.3" fill="none"><circle cx="187.5" cy="80.6" r="7.4" fill="#c4e4fb"/><path d="M192.9 86 L200.5 93.4" stroke-width="1.5"/><path d="M183.5 80.6 H191.5"/></g>
<g stroke="#1769b0" stroke-width="1.3" fill="#bfe0fb"><circle cx="235" cy="83" r="10.2"/><path d="M232.2 78.5 V87.5 M237.8 78.5 V87.5" stroke-width="1.4"/></g>
<g stroke="#e0443e" stroke-width="1.3" fill="#fbd5d3"><circle cx="274.2" cy="83" r="10.2"/><rect x="270.4" y="79.2" width="7.6" height="7.6" rx="0.8"/></g>
<g stroke="#18a832" stroke-width="1.3" fill="#c9f3d0"><circle cx="313.1" cy="83" r="10.2"/><path d="M312.6 79 V87 L306.8 83 Z M318.8 79 V87 L313 83 Z" stroke-width="1.1" stroke-linejoin="round"/></g>
<rect x="341.5" y="81.5" width="131" height="4" fill="#e7eaea" stroke="#d6d6d6" stroke-width="1"/>
<rect x="447" y="73" width="10" height="20" fill="#0078d7"/>
<g stroke="#18a832" stroke-width="1.3" fill="#c9f3d0"><circle cx="500" cy="82.8" r="10.2"/><path d="M494.5 78.8 V86.8 L500.2 82.8 Z M500.6 78.8 V86.8 L506.4 82.8 Z" stroke-width="1.1" stroke-linejoin="round"/></g>
<g stroke="#1769b0" stroke-width="1.3" fill="#bfe0fb"><circle cx="539.2" cy="82.8" r="10.2"/><path d="M535.3 78.6 V87 L541.8 82.8 Z M543.3 78.3 V87.3" stroke-width="1.4" stroke-linejoin="round"/></g>
<g stroke="#1769b0" stroke-width="1.5" fill="none"><path d="M573.3 87 C573.6 73.5 588.5 73 592.3 82.8"/><path d="M588 83.4 H593.4 V77.8" stroke-width="1.7"/><circle cx="574.2" cy="89.4" r="2.4" fill="#b8e0fc"/><circle cx="591.8" cy="89.4" r="2.4" fill="#b8e0fc"/><circle cx="583" cy="89.4" r="2.3" stroke="#a9a9a9" fill="#fff"/></g>
<g><rect x="781.5" y="79.5" width="11" height="12" fill="#d8d8d8" stroke="#9a9a9a"/><rect x="779.5" y="77.5" width="11" height="12" fill="#fff" stroke="#8a8a8a"/><path d="M779.5 80.5 H790.5 M783.2 80.5 V89.5 M786.8 80.5 V89.5 M779.5 83.5 H790.5 M779.5 86.5 H790.5" stroke="#9aa0b0" stroke-width="0.9" fill="none"/><path d="M795.3 82 H804.3 L799.8 87 Z" fill="#3c5a96"/></g>
</svg>
<svg width="1920" height="1080" viewBox="0 0 1920 1080" style="position:absolute;left:0;top:0;pointer-events:none">
<path d="M370.5 112.5 L379.29999999999995 121.30000000000001 M379.29999999999995 112.5 L370.5 121.30000000000001" stroke="#111" stroke-width="1.7" fill="none"/>
<path d="M1895.0 112.19999999999999 L1903.8000000000002 121.0 M1903.8000000000002 112.19999999999999 L1895.0 121.0" stroke="#111" stroke-width="1.7" fill="none"/>
<path d="M17.299999999999997 662.6 L26.5 671.8000000000001 M26.5 662.6 L17.299999999999997 671.8000000000001" stroke="#111" stroke-width="1.7" fill="none"/>
<path d="M16 173.5 L24.2 165.3 M18.3 165 H24.5 V171.2" stroke="#22aa33" stroke-width="1.5" fill="none"/>
<path d="M1636 133.5 V151.5 H1653.8" stroke="#b0b0b0" stroke-width="1.4" fill="none"/>
<path d="M1638.6 142.5 L1642.5 138.8 L1647 143.8 L1652.3 138.8" stroke="#1a6fb4" stroke-width="1.6" fill="none" stroke-linejoin="round"/>
<path d="M1636 408.5 V426.5 H1653.8" stroke="#b0b0b0" stroke-width="1.4" fill="none"/>
<path d="M1638.6 417.5 L1642.5 413.8 L1647 418.8 L1652.3 413.8" stroke="#1a6fb4" stroke-width="1.6" fill="none" stroke-linejoin="round"/>
<path d="M1636 458.5 V476.5 H1653.8" stroke="#b0b0b0" stroke-width="1.4" fill="none"/>
<path d="M1638.6 467.5 L1642.5 463.8 L1647 468.8 L1652.3 463.8" stroke="#1a6fb4" stroke-width="1.6" fill="none" stroke-linejoin="round"/>
<g transform="translate(0 0)" fill="none" stroke-linecap="round"><path d="M1637.2 448.7 L1638.8 446.7 M1639.4 442 C1640.3 439.5 1641.3 438.6 1642.3 438.6 C1644.5 438.6 1644.6 446.4 1647.1 446.4 C1648.4 446.4 1649.2 444.8 1649.8 443 M1650.4 438.6 L1652.2 436.4" stroke="#1a6fb4" stroke-width="1.5"/><path d="M1636.6 445.1 L1642.8 443.3 M1646.6 441.6 L1652.7 440.1" stroke="#1fb02f" stroke-width="1.5"/></g>
<g transform="translate(0 50)" fill="none" stroke-linecap="round"><path d="M1637.2 448.7 L1638.8 446.7 M1639.4 442 C1640.3 439.5 1641.3 438.6 1642.3 438.6 C1644.5 438.6 1644.6 446.4 1647.1 446.4 C1648.4 446.4 1649.2 444.8 1649.8 443 M1650.4 438.6 L1652.2 436.4" stroke="#1a6fb4" stroke-width="1.5"/><path d="M1636.6 445.1 L1642.8 443.3 M1646.6 441.6 L1652.7 440.1" stroke="#1fb02f" stroke-width="1.5"/></g>
<circle cx="47.5" cy="692.8" r="2.4" fill="#a4a4a4"/>
<circle cx="47.5" cy="717.8" r="2.4" fill="#a4a4a4"/>
<circle cx="47.5" cy="742.8" r="2.4" fill="#a4a4a4"/>
<circle cx="47.5" cy="767.8" r="2.4" fill="#a4a4a4"/>
<circle cx="47.5" cy="792.8" r="2.4" fill="#a4a4a4"/>
<circle cx="47.5" cy="817.8" r="2.4" fill="#a4a4a4"/>
<circle cx="47.5" cy="842.8" r="2.4" fill="#a4a4a4"/>
<circle cx="47.5" cy="867.8" r="2.4" fill="#a4a4a4"/>
<circle cx="47.5" cy="892.8" r="2.4" fill="#a4a4a4"/>
<circle cx="47.5" cy="917.8" r="2.4" fill="#a4a4a4"/>
<circle cx="47.5" cy="942.8" r="2.4" fill="#a4a4a4"/>
<circle cx="47.5" cy="967.8" r="2.4" fill="#a4a4a4"/>
<circle cx="47.5" cy="992.8" r="2.4" fill="#a4a4a4"/>
<circle cx="47.5" cy="1017.8" r="2.4" fill="#a4a4a4"/>
</svg>
<span id="t0" class="t fs" style="left:45.3px;top:12.15px;font-size:15.3px;letter-spacing:-0.340px;color:#000">Strategy Tester Visualization : Arbitrage on XAUUSD,M15 from 2025.01.01 to 2025.12.26</span>
<span id="t1" class="t fs" style="left:22.5px;top:43.76px;font-size:14.7px;letter-spacing:-0.591px;color:#000">File</span>
<span id="t2" class="t fs" style="left:71.3px;top:43.76px;font-size:14.7px;letter-spacing:-0.148px;color:#000">View</span>
<span id="t3" class="t fs" style="left:129.4px;top:43.76px;font-size:14.7px;letter-spacing:-0.593px;color:#000">Charts</span>
<span id="t4" class="t fs" style="left:196.3px;top:43.76px;font-size:14.7px;letter-spacing:-0.585px;color:#000">Tester</span>
<span id="t5" class="t fs" style="left:261.0px;top:43.76px;font-size:14.7px;letter-spacing:0.594px;color:#000">Help</span>
<span id="t6" class="t fs" style="left:600.7px;top:77.16px;font-size:14.7px;letter-spacing:-0.051px;color:#000">Skip to</span>
<span id="t7" class="t fs" style="left:660.3px;top:77.66px;font-size:14.7px;letter-spacing:-0.437px;color:#000">2025.05.28 06:32</span>
<span id="t8" class="t fs" style="left:13.5px;top:110.17px;font-size:13.5px;letter-spacing:0.159px;color:#000">Market Watch : 2025.01.10</span>
<span id="t9" class="t fs" style="left:17.0px;top:137.93px;font-size:14.5px;letter-spacing:0.128px;color:#000">Symbol</span>
<span id="t10" class="t fs" style="right:1637.68px;top:137.93px;font-size:14.5px;letter-spacing:-0.184px;color:#000">Bid</span>
<span id="t11" class="t fs" style="right:1541.84px;top:137.93px;font-size:14.5px;letter-spacing:-0.336px;color:#000">Ask</span>
<span id="t12" class="t fs" style="left:36.0px;top:162.83px;font-size:14.5px;letter-spacing:-0.487px;color:#000">XAUUSD</span>
<span id="t13" class="t fs" style="right:1634.70px;top:162.83px;font-size:14.5px;letter-spacing:-0.304px;color:#2222ee">2678.19</span>
<span id="t14" class="t fs" style="right:1540.05px;top:162.83px;font-size:14.5px;letter-spacing:-0.354px;color:#2222ee">2678.33</span>
<span id="t15" class="t fs" style="left:27.0px;top:626.03px;font-size:14.5px;letter-spacing:-0.018px;color:#000">Symbols</span>
<span id="t16" class="t fs" style="left:109.3px;top:626.03px;font-size:14.5px;letter-spacing:-0.461px;color:#808080">Ticks</span>
<span id="t17" class="t fs" style="left:1637.5px;top:109.77px;font-size:13.5px;letter-spacing:0.170px;color:#000">Data Window</span>
<span id="t18" class="t fs" style="left:1660.0px;top:136.63px;font-size:14.5px;letter-spacing:-0.375px;color:#000">XAUUSD,M15</span>
<span id="t19" class="t fs" style="left:1660.2px;top:161.83px;font-size:14.5px;letter-spacing:0.220px;color:#000">Date</span>
<span id="t20" class="t fs" style="right:104.00px;top:161.83px;font-size:14.5px;letter-spacing:-0.398px;color:#000">2025.01.09</span>
<span id="t21" class="t fs" style="right:15.00px;top:161.83px;font-size:14.5px;letter-spacing:-0.398px;color:#000">2025.01.08</span>
<span id="t22" class="t fs" style="left:1660.2px;top:186.83px;font-size:14.5px;letter-spacing:-0.078px;color:#000">Time</span>
<span id="t23" class="t fs" style="right:104.17px;top:186.83px;font-size:14.5px;letter-spacing:-0.574px;color:#000">04:00</span>
<span id="t24" class="t fs" style="right:15.30px;top:186.83px;font-size:14.5px;letter-spacing:-0.700px;color:#000">11:00</span>
<span id="t25" class="t fs" style="left:1660.2px;top:211.83px;font-size:14.5px;letter-spacing:-0.095px;color:#000">Open</span>
<span id="t26" class="t fs" style="right:104.14px;top:211.83px;font-size:14.5px;letter-spacing:-0.537px;color:#000">2658.51</span>
<span id="t27" class="t fs" style="right:15.14px;top:211.83px;font-size:14.5px;letter-spacing:-0.537px;color:#000">2651.93</span>
<span id="t28" class="t fs" style="left:1660.2px;top:236.83px;font-size:14.5px;letter-spacing:0.491px;color:#000">High</span>
<span id="t29" class="t fs" style="right:104.14px;top:236.83px;font-size:14.5px;letter-spacing:-0.537px;color:#000">2660.19</span>
<span id="t30" class="t fs" style="right:15.14px;top:236.83px;font-size:14.5px;letter-spacing:-0.537px;color:#000">2654.98</span>
<span id="t31" class="t fs" style="left:1660.2px;top:261.83px;font-size:14.5px;letter-spacing:-0.105px;color:#000">Low</span>
<span id="t32" class="t fs" style="right:104.14px;top:261.83px;font-size:14.5px;letter-spacing:-0.537px;color:#000">2658.48</span>
<span id="t33" class="t fs" style="right:15.14px;top:261.83px;font-size:14.5px;letter-spacing:-0.537px;color:#000">2651.82</span>
<span id="t34" class="t fs" style="left:1660.2px;top:286.83px;font-size:14.5px;letter-spacing:-0.470px;color:#000">Close</span>
<span id="t35" class="t fs" style="right:104.14px;top:286.83px;font-size:14.5px;letter-spacing:-0.537px;color:#000">2659.13</span>
<span id="t36" class="t fs" style="right:15.14px;top:286.83px;font-size:14.5px;letter-spacing:-0.537px;color:#000">2653.58</span>
<span id="t37" class="t fs" style="left:1660.2px;top:311.83px;font-size:14.5px;letter-spacing:-0.402px;color:#000">Tick Volu...</span>
<span id="t38" class="t fs" style="right:104.30px;top:311.83px;font-size:14.5px;letter-spacing:-0.700px;color:#000">180</span>
<span id="t39" class="t fs" style="right:15.30px;top:311.83px;font-size:14.5px;letter-spacing:-0.700px;color:#000">1070</span>
<span id="t40" class="t fs" style="left:1660.2px;top:336.83px;font-size:14.5px;letter-spacing:-0.173px;color:#000">Spread</span>
<span id="t41" class="t fs" style="right:103.60px;top:336.83px;font-size:14.5px;letter-spacing:0.000px;color:#000">9</span>
<span id="t42" class="t fs" style="right:15.30px;top:336.83px;font-size:14.5px;letter-spacing:-0.700px;color:#000">14</span>
<span id="t43" class="t fs" style="left:1660.2px;top:361.83px;font-size:14.5px;letter-spacing:0.124px;color:#000">High Ask</span>
<span id="t44" class="t fs" style="right:104.28px;top:361.83px;font-size:14.5px;letter-spacing:-0.678px;color:#000">0.00</span>
<span id="t45" class="t fs" style="right:15.28px;top:361.83px;font-size:14.5px;letter-spacing:-0.678px;color:#000">0.00</span>
<span id="t46" class="t fs" style="left:1660.2px;top:386.83px;font-size:14.5px;letter-spacing:0.084px;color:#000">Low Bid</span>
<span id="t47" class="t fs" style="right:104.28px;top:386.83px;font-size:14.5px;letter-spacing:-0.678px;color:#000">0.00</span>
<span id="t48" class="t fs" style="right:15.28px;top:386.83px;font-size:14.5px;letter-spacing:-0.678px;color:#000">0.00</span>
<span id="t49" class="t fs" style="left:1660.2px;top:411.83px;font-size:14.5px;letter-spacing:0.289px;color:#000">Indicator window 1</span>
<span id="t50" class="t fs" style="left:1660.2px;top:436.83px;font-size:14.5px;letter-spacing:-0.683px;color:#000">ATR(16)</span>
<span id="t51" class="t fs" style="right:104.30px;top:436.83px;font-size:14.5px;letter-spacing:-0.700px;color:#000">1.88</span>
<span id="t52" class="t fs" style="right:15.30px;top:436.83px;font-size:14.5px;letter-spacing:-0.700px;color:#000">2.24</span>
<span id="t53" class="t fs" style="left:1660.2px;top:461.83px;font-size:14.5px;letter-spacing:0.347px;color:#000">Indicator window 2</span>
<span id="t54" class="t fs" style="left:1660.2px;top:486.83px;font-size:14.5px;letter-spacing:-0.678px;color:#000">RSI(56)</span>
<span id="t55" class="t fs" style="right:104.17px;top:486.83px;font-size:14.5px;letter-spacing:-0.574px;color:#000">52.19</span>
<span id="t56" class="t fs" style="right:15.27px;top:486.83px;font-size:14.5px;letter-spacing:-0.674px;color:#000">54.34</span>
<span id="t57" class="t fs" style="left:44.5px;top:662.03px;font-size:14.5px;letter-spacing:-0.078px;color:#000">Time</span>
<span id="t58" class="t fm" style="left:243.7px;top:661.68px;font-size:16.6px;letter-spacing:-0.020px;color:#303030">Message</span>
<span id="t59" class="t fs" style="left:63.2px;top:686.33px;font-size:14.5px;letter-spacing:-0.294px;color:#000">2025.12.28 18:00:36.096</span>
<span id="t60" class="t fm" style="left:240.3px;top:686.18px;font-size:16.6px;letter-spacing:-0.039px;color:#303030">2025.01.10 14:31:18</span>
<span id="t61" class="t fm" style="left:461.5px;top:686.18px;font-size:16.6px;letter-spacing:0.019px;color:#303030">[14:31:18] Open trade detected | Floating P/L: 41.03 | RSI=54.30</span>
<span id="t62" class="t fs" style="left:63.2px;top:711.33px;font-size:14.5px;letter-spacing:-0.294px;color:#000">2025.12.28 18:00:36.096</span>
<span id="t63" class="t fm" style="left:240.3px;top:711.18px;font-size:16.6px;letter-spacing:-0.039px;color:#303030">2025.01.10 14:31:19</span>
<span id="t64" class="t fm" style="left:461.5px;top:711.18px;font-size:16.6px;letter-spacing:0.019px;color:#303030">[14:31:19] Open trade detected | Floating P/L: 40.70 | RSI=54.27</span>
<span id="t65" class="t fs" style="left:63.2px;top:736.33px;font-size:14.5px;letter-spacing:-0.294px;color:#000">2025.12.28 18:00:36.096</span>
<span id="t66" class="t fm" style="left:240.3px;top:736.18px;font-size:16.6px;letter-spacing:-0.039px;color:#303030">2025.01.10 14:31:19</span>
<span id="t67" class="t fm" style="left:461.5px;top:736.18px;font-size:16.6px;letter-spacing:0.019px;color:#303030">[14:31:19] Open trade detected | Floating P/L: 40.26 | RSI=54.24</span>
<span id="t68" class="t fs" style="left:63.2px;top:761.33px;font-size:14.5px;letter-spacing:-0.294px;color:#000">2025.12.28 18:00:36.096</span>
<span id="t69" class="t fm" style="left:240.3px;top:761.18px;font-size:16.6px;letter-spacing:-0.039px;color:#303030">2025.01.10 14:31:20</span>
<span id="t70" class="t fm" style="left:461.5px;top:761.18px;font-size:16.6px;letter-spacing:0.019px;color:#303030">[14:31:20] Open trade detected | Floating P/L: 40.37 | RSI=54.25</span>
<span id="t71" class="t fs" style="left:63.2px;top:786.33px;font-size:14.5px;letter-spacing:-0.294px;color:#000">2025.12.28 18:00:36.096</span>
<span id="t72" class="t fm" style="left:240.3px;top:786.18px;font-size:16.6px;letter-spacing:-0.039px;color:#303030">2025.01.10 14:31:21</span>
<span id="t73" class="t fm" style="left:461.5px;top:786.18px;font-size:16.6px;letter-spacing:0.019px;color:#303030">[14:31:21] Open trade detected | Floating P/L: 40.26 | RSI=54.24</span>
<span id="t74" class="t fs" style="left:63.2px;top:811.33px;font-size:14.5px;letter-spacing:-0.294px;color:#000">2025.12.28 18:00:36.096</span>
<span id="t75" class="t fm" style="left:240.3px;top:811.18px;font-size:16.6px;letter-spacing:-0.039px;color:#303030">2025.01.10 14:31:22</span>
<span id="t76" class="t fm" style="left:461.5px;top:811.18px;font-size:16.6px;letter-spacing:0.019px;color:#303030">[14:31:22] Open trade detected | Floating P/L: 40.37 | RSI=54.25</span>
<span id="t77" class="t fs" style="left:63.2px;top:836.33px;font-size:14.5px;letter-spacing:-0.294px;color:#000">2025.12.28 18:00:36.096</span>
<span id="t78" class="t fm" style="left:240.3px;top:836.18px;font-size:16.6px;letter-spacing:-0.039px;color:#303030">2025.01.10 14:31:22</span>
<span id="t79" class="t fm" style="left:461.5px;top:836.18px;font-size:16.6px;letter-spacing:0.019px;color:#303030">[14:31:22] Open trade detected | Floating P/L: 40.26 | RSI=54.24</span>
<span id="t80" class="t fs" style="left:63.2px;top:861.33px;font-size:14.5px;letter-spacing:-0.294px;color:#000">2025.12.28 18:00:36.096</span>
<span id="t81" class="t fm" style="left:240.3px;top:861.18px;font-size:16.6px;letter-spacing:-0.039px;color:#303030">2025.01.10 14:31:23</span>
<span id="t82" class="t fm" style="left:461.5px;top:861.18px;font-size:16.6px;letter-spacing:0.019px;color:#303030">[14:31:23] Open trade detected | Floating P/L: 40.37 | RSI=54.25</span>
<span id="t83" class="t fs" style="left:63.2px;top:886.33px;font-size:14.5px;letter-spacing:-0.294px;color:#000">2025.12.28 18:00:36.096</span>
<span id="t84" class="t fm" style="left:240.3px;top:886.18px;font-size:16.6px;letter-spacing:-0.039px;color:#303030">2025.01.10 14:31:24</span>
<span id="t85" class="t fm" style="left:461.5px;top:886.18px;font-size:16.6px;letter-spacing:0.019px;color:#303030">[14:31:24] Open trade detected | Floating P/L: 40.26 | RSI=54.24</span>
<span id="t86" class="t fs" style="left:63.2px;top:911.33px;font-size:14.5px;letter-spacing:-0.294px;color:#000">2025.12.28 18:00:36.097</span>
<span id="t87" class="t fm" style="left:240.3px;top:911.18px;font-size:16.6px;letter-spacing:-0.039px;color:#303030">2025.01.10 14:31:24</span>
<span id="t88" class="t fm" style="left:461.5px;top:911.18px;font-size:16.6px;letter-spacing:0.019px;color:#303030">[14:31:24] Open trade detected | Floating P/L: 40.37 | RSI=54.25</span>
<span id="t89" class="t fs" style="left:63.2px;top:936.33px;font-size:14.5px;letter-spacing:-0.294px;color:#000">2025.12.28 18:00:36.097</span>
<span id="t90" class="t fm" style="left:240.3px;top:936.18px;font-size:16.6px;letter-spacing:-0.039px;color:#303030">2025.01.10 14:31:25</span>
<span id="t91" class="t fm" style="left:461.5px;top:936.18px;font-size:16.6px;letter-spacing:0.019px;color:#303030">[14:31:25] Open trade detected | Floating P/L: 40.04 | RSI=54.23</span>
<span id="t92" class="t fs" style="left:63.2px;top:961.33px;font-size:14.5px;letter-spacing:-0.294px;color:#000">2025.12.28 18:00:36.097</span>
<span id="t93" class="t fm" style="left:240.3px;top:961.18px;font-size:16.6px;letter-spacing:-0.039px;color:#303030">2025.01.10 14:31:26</span>
<span id="t94" class="t fm" style="left:461.5px;top:961.18px;font-size:16.6px;letter-spacing:0.019px;color:#303030">[14:31:26] Open trade detected | Floating P/L: 39.71 | RSI=54.21</span>
<span id="t95" class="t fs" style="left:63.2px;top:986.33px;font-size:14.5px;letter-spacing:-0.294px;color:#000">2025.12.28 18:00:36.097</span>
<span id="t96" class="t fm" style="left:240.3px;top:986.18px;font-size:16.6px;letter-spacing:-0.039px;color:#303030">2025.01.10 14:31:27</span>
<span id="t97" class="t fm" style="left:461.5px;top:986.18px;font-size:16.6px;letter-spacing:0.019px;color:#303030">[14:31:27] Open trade detected | Floating P/L: 39.27 | RSI=54.18</span>
<span id="t98" class="t fs" style="left:63.2px;top:1011.33px;font-size:14.5px;letter-spacing:-0.294px;color:#000">2025.12.28 18:00:36.097</span>
<span id="t99" class="t fm" style="left:240.3px;top:1011.18px;font-size:16.6px;letter-spacing:-0.039px;color:#303030">2025.01.10 14:31:27</span>
<span id="t100" class="t fm" style="left:461.5px;top:1011.18px;font-size:16.6px;letter-spacing:0.019px;color:#303030">[14:31:27] Open trade detected | Floating P/L: 38.94 | RSI=54.15</span>
<span id="t101" class="t fs" style="left:54.0px;top:1054.93px;font-size:14.5px;letter-spacing:-0.223px;color:#808080">Trade</span>
<span id="t102" class="t fs" style="left:117.0px;top:1054.93px;font-size:14.5px;letter-spacing:0.312px;color:#808080">History</span>
<span id="t103" class="t fs" style="left:190.0px;top:1054.93px;font-size:14.5px;letter-spacing:0.229px;color:#808080">Operations</span>
<span id="t104" class="t fs" style="left:288.5px;top:1054.93px;font-size:14.5px;letter-spacing:-0.177px;color:#000">Journal</span>
</body></html>
